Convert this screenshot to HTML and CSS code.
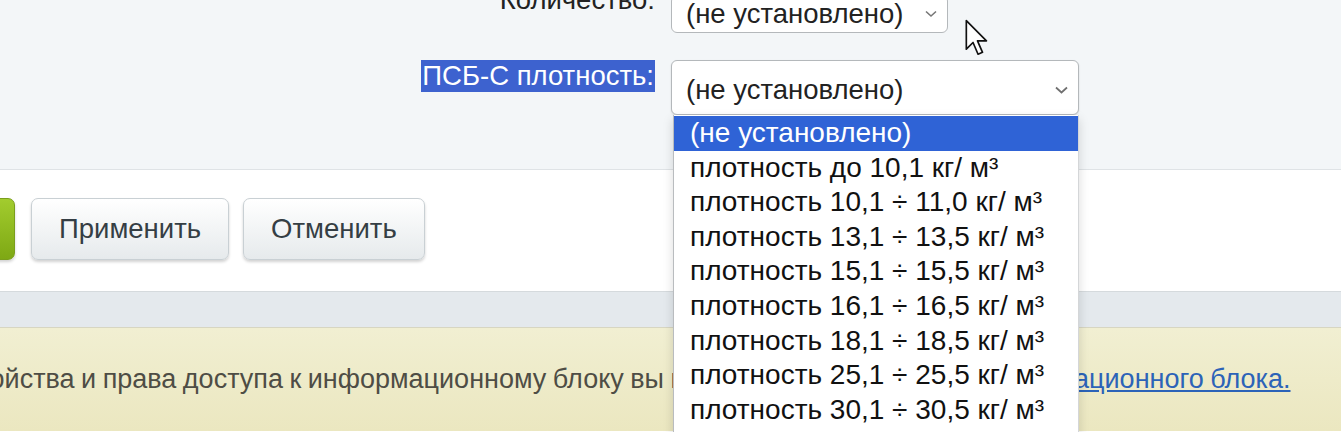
FILE: index.html
```html
<!DOCTYPE html>
<html lang="ru">
<head>
    <meta charset="UTF-8">
    <title>Свойства элемента</title>
    <link rel="stylesheet" href="styles.css">
</head>
<body>
    <div class="page">
        <div class="form-area">
            <div class="form-row first-row">
                <label class="field-label" for="kolvo">Количество:</label>
                <div class="select-box small">
                    <span>(не установлено)</span>
                    <svg class="chevron" width="12" height="8" viewBox="0 0 12 8"><path d="M1 1.5 L6 6 L11 1.5" fill="none" stroke="#777" stroke-width="1.6"/></svg>
                </div>
            </div>
            <div class="form-row">
                <label class="field-label" for="psb"><span class="selected-text">ПСБ-С плотность:</span></label>
                <div class="select-box wide">
                    <span>(не установлено)</span>
                    <svg class="chevron" width="13" height="8" viewBox="0 0 13 8"><path d="M1 1.5 L6.5 6.5 L12 1.5" fill="none" stroke="#6f6f6f" stroke-width="1.7"/></svg>
                </div>
            </div>
        </div>

        <div class="buttons-area">
            <button class="btn btn-save">Сохранить</button>
            <button class="btn">Применить</button>
            <button class="btn">Отменить</button>
        </div>

        <div class="band"></div>

        <div class="notice">
            <p>Свойства и права доступа к информационному блоку вы можете задать в форме <a href="#">информационного блока.</a></p>
        </div>

        <!-- открытый список -->
        <ul class="dropdown">
            <li class="active">(не установлено)</li>
            <li>плотность до 10,1 кг/ м³</li>
            <li>плотность 10,1 ÷ 11,0 кг/ м³</li>
            <li>плотность 13,1 ÷ 13,5 кг/ м³</li>
            <li>плотность 15,1 ÷ 15,5 кг/ м³</li>
            <li>плотность 16,1 ÷ 16,5 кг/ м³</li>
            <li>плотность 18,1 ÷ 18,5 кг/ м³</li>
            <li>плотность 25,1 ÷ 25,5 кг/ м³</li>
            <li>плотность 30,1 ÷ 30,5 кг/ м³</li>
            <li>плотность 35,1 ÷ 35,5 кг/ м³</li>
        </ul>

        <svg class="cursor" width="27" height="38" viewBox="0 0 24 34">
            <path d="M2 1.5 L2 27 L8 21 L12.5 31.5 L16.5 29.8 L12 19.5 L20 19.5 Z" fill="#fff" stroke="#111" stroke-width="1.5" stroke-linejoin="round"/>
        </svg>
    </div>
</body>
</html>
```

FILE: styles.css
```css
* {
    margin: 0;
    padding: 0;
    box-sizing: border-box;
}

body {
    font-family: 'Liberation Sans', Arial, sans-serif;
    color: #222;
    background-color: #fff;
    overflow: hidden;
}

.page {
    position: relative;
    width: 1341px;
    height: 432px;
    overflow: hidden;
}

/* верхняя часть формы */
.form-area {
    display: flow-root;
    height: 170px;
    background-color: #f3f6f8;
    border-bottom: 1px solid #dfe3e6;
}

.form-row {
    display: grid;
    grid-template-columns: 655px 410px;
    column-gap: 16px;
    align-items: start;
    margin-bottom: 27px;
}

.first-row {
    margin-top: -5px;
}

.field-label {
    text-align: right;
    font-size: 27.5px;
    line-height: 32px;
    color: #222;
}

.first-row .field-label {
    margin-top: -11px;
}

.selected-text {
    background-color: #3d62cf;
    color: #fff;
    display: inline-block;
    padding: 0 1px;
}

.select-box {
    display: flex;
    align-items: center;
    justify-content: space-between;
    background-color: #fff;
    border: 1px solid #b4b8bb;
    border-radius: 6px;
    font-size: 27.5px;
    color: #222;
    padding: 0 10px 0 14px;
}

.select-box.small {
    width: 277px;
    height: 38px;
}

.select-box.wide {
    width: 408px;
    height: 55px;
    padding-top: 4px;
    box-shadow: 0 1px 2px rgba(0, 0, 0, 0.12);
}

.chevron {
    flex: none;
}

/* кнопки */
.buttons-area {
    height: 122px;
    background-color: #fff;
    display: flex;
    align-items: flex-start;
    gap: 14px;
    padding-top: 28px;
    border-bottom: 1px solid #d5dadd;
}

.btn {
    height: 62px;
    padding: 0 27px;
    font-family: 'Liberation Sans', Arial, sans-serif;
    font-size: 27.5px;
    color: #353e44;
    background: linear-gradient(#ffffff, #e6eaec);
    border: 1px solid #c9d0d4;
    border-radius: 7px;
    box-shadow: 0 2px 3px rgba(0, 0, 0, 0.18);
    cursor: pointer;
}

.btn-save {
    width: 180px;
    margin-left: -165px;
    margin-right: 2px;
    color: #fff;
    background: linear-gradient(#a2cc2e, #7ea814);
    border-color: #7a9e1c;
}

.band {
    height: 36px;
    background-color: #e4e9ed;
    border-bottom: 1px solid #d7d6c2;
}

/* сообщение */
.notice {
    height: 103px;
    background: linear-gradient(#f1efd2, #ebe7c0);
    padding-top: 36px;
}

.notice p {
    font-size: 27px;
    color: #4e4d45;
    white-space: nowrap;
    word-spacing: -1px;
    margin-left: -44px;
}

.notice a {
    color: #2c63b8;
}

/* выпадающий список */
.dropdown {
    position: absolute;
    left: 673px;
    top: 115px;
    width: 406px;
    list-style: none;
    background-color: #fff;
    border-left: 1px solid #b9bcbf;
    border-right: 1px solid #d4d6d8;
    box-shadow: 0 4px 10px rgba(0, 0, 0, 0.15);
    padding-top: 1px;
}

.dropdown li {
    height: 34.6px;
    line-height: 34.6px;
    font-size: 28px;
    color: #111;
    padding-left: 16px;
    white-space: nowrap;
}

.dropdown li.active {
    background-color: #2f63d6;
    color: #fff;
}

.cursor {
    position: absolute;
    left: 964px;
    top: 19px;
}
```
